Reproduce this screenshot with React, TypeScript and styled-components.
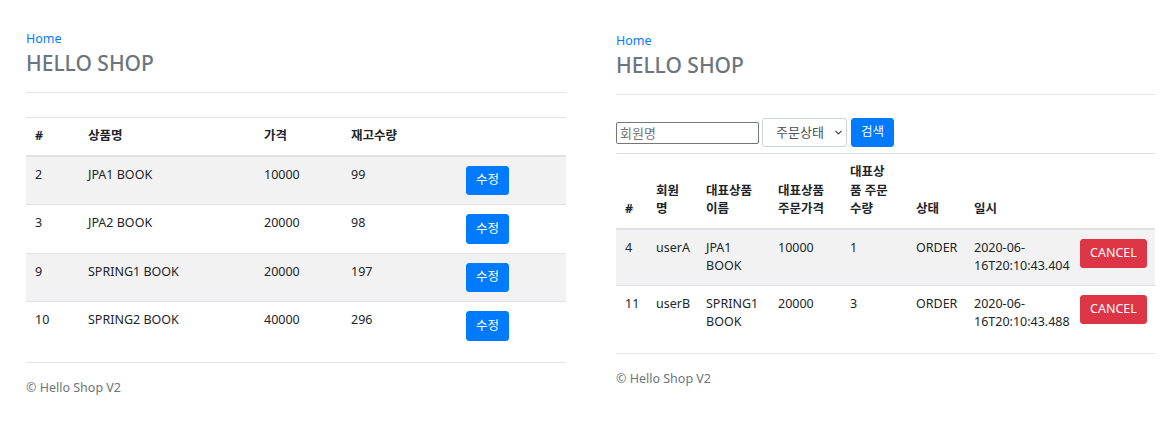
import React from 'react';
import styled, { createGlobalStyle } from 'styled-components';
import { ChevronDown } from 'lucide-react';

type Item = { id: number; name: string; price: number; stock: number };
type Order = {
  id: number;
  member: string;
  item: string;
  price: number;
  count: number;
  status: string;
  date: [string, string];
};

const ITEMS: Item[] = [
  { id: 2, name: 'JPA1 BOOK', price: 10000, stock: 99 },
  { id: 3, name: 'JPA2 BOOK', price: 20000, stock: 98 },
  { id: 9, name: 'SPRING1 BOOK', price: 20000, stock: 197 },
  { id: 10, name: 'SPRING2 BOOK', price: 40000, stock: 296 },
];

const ORDERS: Order[] = [
  {
    id: 4,
    member: 'userA',
    item: 'JPA1 BOOK',
    price: 10000,
    count: 1,
    status: 'ORDER',
    date: ['2020-06-', '16T20:10:43.404'],
  },
  {
    id: 11,
    member: 'userB',
    item: 'SPRING1 BOOK',
    price: 20000,
    count: 3,
    status: 'ORDER',
    date: ['2020-06-', '16T20:10:43.488'],
  },
];

const GlobalStyle = createGlobalStyle`
  * {
    box-sizing: border-box;
  }
  body {
    margin: 0;
    background: #fff;
    color: #212529;
    font-family: "Noto Sans", "Noto Sans CJK KR", sans-serif;
    font-size: 12.5px;
    line-height: 18.5px;
  }
`;

const Header: React.FC = () => (
  <StyledHeader>
    <HomeLink href="#">Home</HomeLink>
    <Title>HELLO SHOP</Title>
  </StyledHeader>
);

const Footer: React.FC = () => <StyledFooter>© Hello Shop V2</StyledFooter>;

const ItemList: React.FC = () => (
  <Panel $width={540} $left={26} $top={30}>
    <Header />
    <Table $top={24}>
      <colgroup>
        <Col $w={53} />
        <Col $w={176} />
        <Col $w={87} />
        <Col $w={115} />
        <Col $w={109} />
      </colgroup>
      <thead>
        <tr>
          <Th>#</Th>
          <Th>상품명</Th>
          <Th>가격</Th>
          <Th>재고수량</Th>
          <Th />
        </tr>
      </thead>
      <tbody>
        {ITEMS.map((item) => (
          <tr key={item.id}>
            <Td>{item.id}</Td>
            <Td>{item.name}</Td>
            <Td>{item.price}</Td>
            <Td>{item.stock}</Td>
            <Td>
              <Button>수정</Button>
            </Td>
          </tr>
        ))}
      </tbody>
    </Table>
    <Footer />
  </Panel>
);

const OrderList: React.FC = () => (
  <Panel $width={539} $left={50} $top={32}>
    <Header />
    <SearchForm>
      <NameInput placeholder="회원명" />
      <SelectWrap>
        <StatusSelect defaultValue="">
          <option value="">주문상태</option>
          <option value="ORDER">주문</option>
          <option value="CANCEL">취소</option>
        </StatusSelect>
        <SelectArrow size={11} strokeWidth={2.2} />
      </SelectWrap>
      <Button type="button">검색</Button>
    </SearchForm>
    <Table $top={6}>
      <colgroup>
        <Col $w={31} />
        <Col $w={50} />
        <Col $w={72} />
        <Col $w={72} />
        <Col $w={66} />
        <Col $w={58} />
        <Col $w={106} />
        <Col $w={84} />
      </colgroup>
      <thead>
        <tr>
          <Th>#</Th>
          <Th>회원명</Th>
          <Th>대표상품 이름</Th>
          <Th>대표상품 주문가격</Th>
          <Th>대표상품 주문수량</Th>
          <Th>상태</Th>
          <Th>일시</Th>
          <Th />
        </tr>
      </thead>
      <tbody>
        {ORDERS.map((order) => (
          <tr key={order.id}>
            <Td>{order.id}</Td>
            <Td>{order.member}</Td>
            <Td>{order.item}</Td>
            <Td>{order.price}</Td>
            <Td>{order.count}</Td>
            <Td>{order.status}</Td>
            <Td>
              {order.date[0]}
              <wbr />
              {order.date[1]}
            </Td>
            <Td>
              <Button $variant="danger">CANCEL</Button>
            </Td>
          </tr>
        ))}
      </tbody>
    </Table>
    <Footer />
  </Panel>
);

const App: React.FC = () => (
  <>
    <GlobalStyle />
    <Page>
      <ItemList />
      <OrderList />
    </Page>
  </>
);

const Page = styled.div`
  display: flex;
  align-items: flex-start;
`;

const Panel = styled.div<{ $width: number; $left: number; $top: number }>`
  width: ${(p) => p.$width}px;
  margin-left: ${(p) => p.$left}px;
  padding-top: ${(p) => p.$top}px;
  flex: none;
`;

const StyledHeader = styled.div`
  padding-bottom: 16px;
  border-bottom: 1px solid #e5e5e5;
`;

const HomeLink = styled.a`
  display: block;
  color: #007bff;
  text-decoration: none;
  line-height: 18px;
`;

const Title = styled.h3`
  margin: 3px 0 0;
  font-size: 21px;
  font-weight: 500;
  line-height: 25px;
  color: #6c757d;
`;

const SearchForm = styled.form`
  display: flex;
  align-items: center;
  margin-top: 23px;
  height: 29px;
`;

const NameInput = styled.input`
  width: 143px;
  height: 22px;
  margin-right: 3px;
  padding: 1px 3px;
  border: 1px solid #767676;
  border-radius: 2px;
  font: inherit;
  font-size: 13px;
  color: #212529;
  &::placeholder {
    color: #757575;
  }
`;

const SelectWrap = styled.div`
  position: relative;
  margin-right: 4px;
`;

const StatusSelect = styled.select`
  appearance: none;
  display: block;
  width: 85px;
  height: 29px;
  padding: 0 20px 0 13px;
  border: 1px solid #ced4da;
  border-radius: 3px;
  background: #fff;
  font: inherit;
  font-size: 13px;
  color: #495057;
`;

const SelectArrow = styled(ChevronDown)`
  position: absolute;
  right: 3px;
  top: 9px;
  color: #333;
  pointer-events: none;
`;

const Button = styled.button<{ $variant?: 'primary' | 'danger' }>`
  display: inline-block;
  padding: 4.5px 9px;
  border: 1px solid ${(p) => (p.$variant === 'danger' ? '#dc3545' : '#007bff')};
  border-radius: 3px;
  background: ${(p) => (p.$variant === 'danger' ? '#dc3545' : '#007bff')};
  color: #fff;
  font: inherit;
  font-size: 12.5px;
  line-height: 18.5px;
  cursor: pointer;
`;

const Table = styled.table<{ $top: number }>`
  width: 100%;
  margin-top: ${(p) => p.$top}px;
  margin-bottom: 12px;
  border-collapse: collapse;
  table-layout: fixed;
  tbody tr:nth-of-type(odd) {
    background: rgba(0, 0, 0, 0.05);
  }
`;

const Col = styled.col<{ $w: number }>`
  width: ${(p) => p.$w}px;
`;

const Th = styled.th`
  padding: 9px 12px 9px 9px;
  border-top: 1px solid #dee2e6;
  border-bottom: 2px solid #dee2e6;
  text-align: left;
  vertical-align: bottom;
  font-weight: 700;
  word-break: break-all;
`;

const Td = styled.td`
  padding: 9px;
  border-top: 1px solid #dee2e6;
  vertical-align: top;
`;

const StyledFooter = styled.div`
  padding-top: 16px;
  border-top: 1px solid #e5e5e5;
  color: #6c757d;
  line-height: 18px;
`;

export default App;
